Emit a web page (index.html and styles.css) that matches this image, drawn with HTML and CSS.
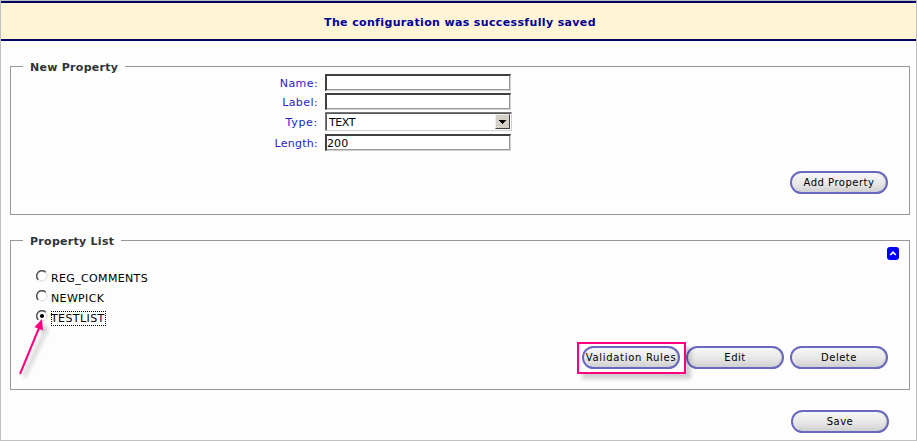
FILE: index.html
```html
<!DOCTYPE html>
<html lang="en">
<head>
<meta charset="utf-8">
<title>Property Configuration</title>
<link rel="stylesheet" href="styles.css">
</head>
<body>
<main class="page">
  <div class="banner"><span>The configuration was successfully saved</span></div>
  <fieldset class="panel panel-new">
    <legend><span class="t-new">New Property</span></legend>
    <div class="form">
      <label class="l-name" for="name">Name:</label><input id="name" type="text">
      <label class="l-label" for="label">Label:</label><input id="label" type="text">
      <label class="l-type" for="type">Type:</label>
      <div class="select" id="type"><span>TEXT</span><i class="drop"><svg width="7" height="4" viewBox="0 0 7 4" shape-rendering="crispEdges"><path d="M0 0H7V1H6V2H5V3H4V4H3V3H2V2H1V1H0Z"/></svg></i></div>
      <label class="l-length" for="length">Length:</label><input id="length" type="text" value="200">
    </div>
    <div class="actions"><button type="button"><span class="t-add">Add Property</span></button></div>
  </fieldset>
  <fieldset class="panel panel-list">
    <legend><span class="t-list">Property List</span></legend>
    <div class="collapse"><svg width="12" height="13" viewBox="0 0 12 13"><rect width="12" height="13" rx="3" fill="#0000f8"/><path d="M3.200 8 6 5.200 8.800 8" fill="none" stroke="#fff" stroke-width="1.700"/></svg></div>
    <div class="options">
      <div class="option"><svg class="radio" width="12" height="12" viewBox="0 0 12 12"><circle cx="6" cy="6" r="5" fill="#fff" stroke="#dcdad5"/><path d="M2.2 9.800A5.300 5.300 0 0 1 9.800 2.200" fill="none" stroke="#555" stroke-width="1.500"/></svg><span class="o-reg">REG_COMMENTS</span></div>
      <div class="option"><svg class="radio" width="12" height="12" viewBox="0 0 12 12"><circle cx="6" cy="6" r="5" fill="#fff" stroke="#dcdad5"/><path d="M2.2 9.800A5.300 5.300 0 0 1 9.800 2.200" fill="none" stroke="#555" stroke-width="1.500"/></svg><span class="o-new">NEWPICK</span></div>
      <div class="option"><svg class="radio" width="12" height="12" viewBox="0 0 12 12"><circle cx="6" cy="6" r="5" fill="#fff" stroke="#dcdad5"/><path d="M2.2 9.800A5.300 5.300 0 0 1 9.800 2.200" fill="none" stroke="#555" stroke-width="1.500"/><circle cx="6" cy="6" r="2.100"/></svg><span class="o-test focused">TESTLIST</span></div>
    </div>
    <div class="actions">
      <div class="marked"><button type="button"><span class="t-val">Validation Rules</span></button></div>
      <button type="button"><span class="t-edit">Edit</span></button>
      <button type="button"><span class="t-del">Delete</span></button>
    </div>
  </fieldset>
  <div class="footer"><button type="button"><span class="t-save">Save</span></button></div>
  <svg class="arrow" width="50" height="80" viewBox="0 0 50 80">
    <g class="arrow-shadow" fill="#888" stroke="#888"><path d="M9 67 29 24" stroke-width="3"/><path d="M31 15 24 20 32 24Z"/></g>
    <path d="M5 64 24 18" stroke="#ff0080" stroke-width="2"/><path d="M27 9 19.500 17 28 20.500Z" fill="#ff0080"/>
  </svg>
</main>
</body>
</html>
```
FILE: styles.css
```css
*, *::after { box-sizing: border-box; }
body { margin: 0; font: 11px/13px "DejaVu Sans", sans-serif; color: #000; }
.page { position: relative; width: 917px; height: 441px; border: 1px solid #c0c0c0; background: #fdfdfd; overflow: hidden; }
.banner { height: 40px; border: solid #000066; border-width: 2px 0; background: #fff5d6; color: #000099; font-weight: bold; display: flex; justify-content: center; align-items: center; padding: 2px 0 0 3px; white-space: nowrap; letter-spacing: .36px; }
.panel { width: 900px; margin: 0 0 0 9px; padding: 0; border: 1px solid #999; min-width: 0; }
.panel-new { height: 155px; margin-top: 19px; }
.panel-list { height: 156px; margin-top: 19px; }
legend { margin-left: 12px; padding: 0 7px; height: 13px; font-weight: bold; color: #333; white-space: nowrap; letter-spacing: .28px; }
.t-new, .t-list { position: relative; top: 1px; }
.form { display: grid; grid-template-columns: 307px 187px; column-gap: 7px; grid-template-rows: 17px 17px 19px 17px; row-gap: 2px; padding-top: 1px; color: #2424c8; }
.form label { justify-self: end; align-self: center; padding-top: 1px; letter-spacing: .4px; }
.form .l-type { letter-spacing: .7px; }
.form .l-length { letter-spacing: .25px; }
.form input { width: 186px; height: 17px; padding: 0; border: 2px solid; border-color: #404040 #d0d0d0 #d0d0d0 #404040; border-right-width: 1px; border-bottom-width: 1px; background: #fff; color: #000; font: inherit; outline: 0; border-radius: 0; box-shadow: inset -1px -1px #999; }
.l-length, #length { position: relative; top: 1px; }
.form #length { padding-top: 1px; letter-spacing: .1px; }
.select { display: flex; justify-content: space-between; width: 187px; height: 19px; border: 1px solid; border-color: #777 #d0d0d0 #d0d0d0 #777; background: #fff; color: #000; padding: 1px 1px 1px 3px; line-height: 17px; box-shadow: inset 1px 1px #555; letter-spacing: -.4px; }
.drop { display: flex; align-items: center; justify-content: center; width: 15px; height: 15px; background: #d4d0c8; border: 1px solid; border-color: #eee #404040 #404040 #eee; }
.actions { display: flex; justify-content: flex-end; gap: 6px; padding-right: 21px; }
.panel-new .actions { margin-top: 21px; }
button { width: 98px; height: 23px; padding: 0; border: 2px solid #6868c0; border-radius: 12px; background: linear-gradient(#f7f7f7, #e5e5e5 60%, #d0d0d0); box-shadow: inset 1px 0 #f4f4f4, inset -1px 0 #ccc; font: inherit; font-size: 10px; color: #000; display: flex; align-items: center; justify-content: center; white-space: nowrap; letter-spacing: .5px; }
.t-val { letter-spacing: .7px; }
.collapse { height: 13px; display: flex; justify-content: flex-end; padding-right: 10px; }
.options { padding: 8px 0 0 25px; }
.option { height: 20px; display: flex; align-items: center; gap: 3px; letter-spacing: .35px; }
.radio { margin-top: -4px; }
.option span { padding: 1px 1px 1px 0; line-height: 13px; white-space: nowrap; }
.option .focused { outline: 1px dotted #000; outline-offset: -1px; letter-spacing: .4px; }
.panel-list .actions { margin-top: 18px; }
.marked { position: relative; }
.marked::after { content: ""; position: absolute; left: -5px; top: -4px; width: 109px; height: 32px; border: 2px solid #ff0080; box-shadow: 5px 5px 4px rgba(0,0,0,.18); }
.footer { display: flex; justify-content: flex-end; padding: 20px 27px 0 0; }
.arrow { position: absolute; left: 14px; top: 309px; }
.arrow-shadow { filter: blur(2px); opacity: .45; }
```
